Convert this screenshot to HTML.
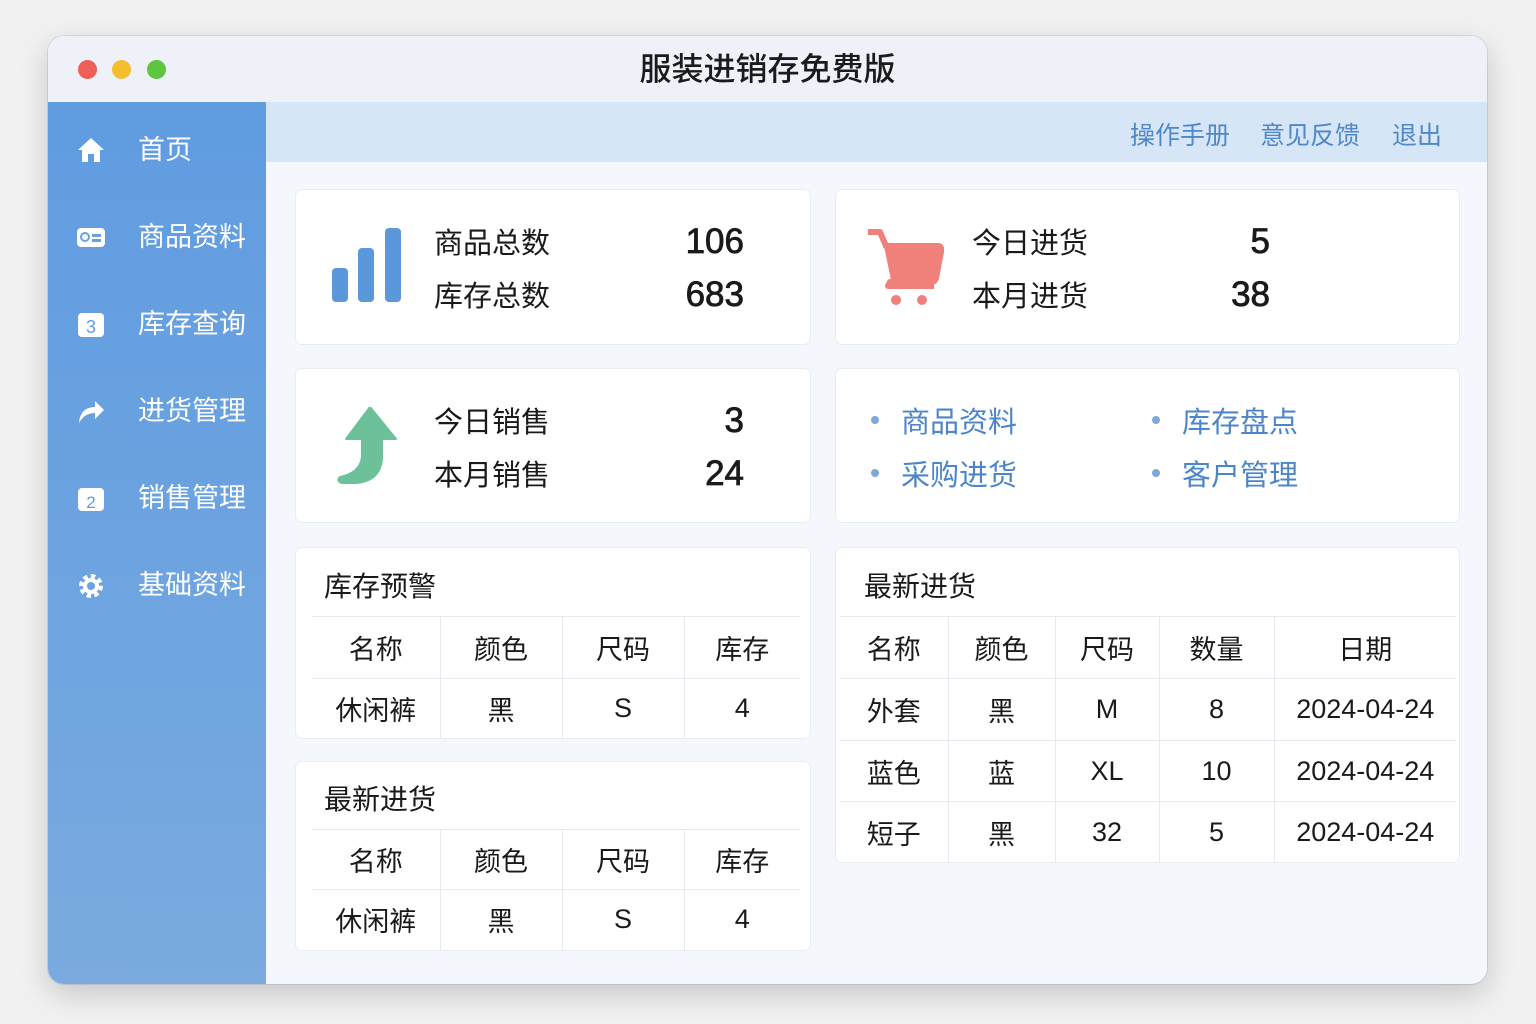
<!DOCTYPE html>
<html><head><meta charset="utf-8"><style>
*{margin:0;padding:0;box-sizing:border-box}
body{width:1536px;height:1024px;background:#f1f1f2;font-family:"Liberation Sans","Noto Sans CJK SC",sans-serif;position:relative;overflow:hidden}
.win{position:absolute;left:48px;top:36px;width:1439px;height:948px;border-radius:16px;overflow:hidden;background:#f4f7fb;box-shadow:0 10px 30px rgba(0,0,0,.18),0 0 0 1px #d8dce2}
.title{position:absolute;left:0;top:0;width:100%;height:66px;background:#eef2f8;text-align:center;line-height:66px;font-size:32px;color:#1b1b1b;font-weight:500}
.dot{position:absolute;top:24px;width:19px;height:19px;border-radius:50%}
.side{position:absolute;left:0;top:66px;width:218px;height:882px;background:linear-gradient(#5f9ce0,#7aaadf)}
.si{position:absolute;left:0;width:218px;color:#fff;font-size:27px}
.si span{position:absolute;left:90px;top:0;line-height:40px}
.si svg{position:absolute;left:28px;top:6px}
.top{position:absolute;left:218px;top:66px;right:0;height:60px;background:#d6e6f7}
.top a{position:absolute;top:14px;font-size:25px;color:#4f88c9}
.card{position:absolute;background:#fff;border-radius:6px;box-shadow:0 0 0 1px #e8edf3}
.lab{position:absolute;font-size:29px;color:#1a1a1a}
.num{position:absolute;font-size:35px;color:#1a1a1a;text-align:right;width:120px;-webkit-text-stroke:0.8px #1a1a1a}
.lk{position:absolute;font-size:29px;color:#4c86c9}
.lk:before{content:"";position:absolute;left:-30px;top:17px;width:8px;height:8px;border-radius:50%;background:#7fa8d9}
table{position:absolute;border-collapse:collapse;font-size:27px;color:#1a1a1a}
td{text-align:center;border-right:1px solid #e6eaef;border-top:1px solid #e6eaef;padding:0}
td:last-child{border-right:none}
.tt{position:absolute;font-size:28px;color:#1a1a1a}
</style></head><body>
<div class="win">
<div class="title">服装进销存免费版</div>
<div class="dot" style="left:30px;background:#ee5f57"></div>
<div class="dot" style="left:64px;background:#f4be2f"></div>
<div class="dot" style="left:99px;background:#5ec53f"></div>
<div class="side">
 <div class="si" style="top:28px"><svg width="30" height="28" viewBox="0 0 30 28"><path d="M15 2 L2 14 H6 V26 H12 V18 H18 V26 H24 V14 H28 Z" fill="#fff"/></svg><span>首页</span></div>
 <div class="si" style="top:115px"><svg width="30" height="28" viewBox="0 0 30 28"><rect x="1" y="5" width="28" height="19" rx="4" fill="#fff"/><rect x="16" y="11" width="9" height="3" fill="#6aa2e0"/><rect x="16" y="16" width="9" height="3" fill="#6aa2e0"/><circle cx="9" cy="14" r="4" fill="none" stroke="#6aa2e0" stroke-width="2"/></svg><span>商品资料</span></div>
 <div class="si" style="top:202px"><svg width="30" height="28" viewBox="0 0 30 28"><rect x="2" y="3" width="26" height="24" rx="4" fill="#fff"/><text x="15" y="23" font-size="18" text-anchor="middle" fill="#5f9ce0" font-family="Liberation Sans">3</text></svg><span>库存查询</span></div>
 <div class="si" style="top:289px"><svg width="30" height="28" viewBox="0 0 30 28"><path d="M3 26 C4 14 11 10 19 10 V4 L28 13 L19 22 V16 C12 16 7 19 3 26 Z" fill="#fff"/></svg><span>进货管理</span></div>
 <div class="si" style="top:376px"><svg width="30" height="28" viewBox="0 0 30 28"><rect x="2" y="4" width="26" height="23" rx="4" fill="#fff"/><text x="15" y="24" font-size="17" text-anchor="middle" fill="#5f9ce0" font-family="Liberation Sans">2</text></svg><span>销售管理</span></div>
 <div class="si" style="top:463px"><svg width="30" height="30" viewBox="0 0 30 30"><circle cx="15" cy="15" r="9" fill="none" stroke="#fff" stroke-width="6" stroke-dasharray="4 3"/><circle cx="15" cy="15" r="8" fill="#fff"/><circle cx="15" cy="15" r="4" fill="#6ba3e0"/></svg><span>基础资料</span></div>
</div>
<div class="top"><a style="left:864px">操作手册</a><a style="left:994px">意见反馈</a><a style="left:1126px">退出</a></div>

<div class="card" style="left:248px;top:154px;width:514px;height:154px">
 <svg style="position:absolute;left:36px;top:38px" width="72" height="76"><rect x="0" y="40" width="16" height="34" rx="4" fill="#5b97db"/><rect x="26" y="20" width="16" height="54" rx="4" fill="#5b97db"/><rect x="53" y="0" width="16" height="74" rx="4" fill="#5b97db"/></svg>
 <div class="lab" style="left:138px;top:30px">商品总数</div><div class="lab" style="left:138px;top:83px">库存总数</div>
 <div class="num" style="left:328px;top:32px">106</div><div class="num" style="left:328px;top:85px">683</div>
</div>
<div class="card" style="left:788px;top:154px;width:623px;height:154px">
 <svg style="position:absolute;left:28px;top:36px" width="80" height="82"><path d="M4 6 H16 L22 20 H74 Q78 20 77 26 L72 52 Q71 56 66 56 H26 L24 60 H70" fill="none" stroke="#f0807a" stroke-width="6" stroke-linejoin="round"/><path d="M20 20 H76 L71 54 H27 Z" fill="#f0807a"/><circle cx="32" cy="74" r="5" fill="#f0807a"/><circle cx="58" cy="74" r="5" fill="#f0807a"/></svg>
 <div class="lab" style="left:136px;top:30px">今日进货</div><div class="lab" style="left:136px;top:83px">本月进货</div>
 <div class="num" style="left:314px;top:32px">5</div><div class="num" style="left:314px;top:85px">38</div>
</div>
<div class="card" style="left:248px;top:333px;width:514px;height:153px">
 <svg style="position:absolute;left:40px;top:38px" width="66" height="80"><path d="M34 0 L60 32 H46 V52 Q44 74 20 76 H6 Q0 74 4 70 Q24 66 26 50 V32 H10 Z" fill="#6cc19b" stroke="#6cc19b" stroke-width="2" stroke-linejoin="round"/></svg>
 <div class="lab" style="left:138px;top:30px">今日销售</div><div class="lab" style="left:138px;top:83px">本月销售</div>
 <div class="num" style="left:328px;top:32px">3</div><div class="num" style="left:328px;top:85px">24</div>
</div>
<div class="card" style="left:788px;top:333px;width:623px;height:153px">
 <div class="lk" style="left:65px;top:30px">商品资料</div><div class="lk" style="left:65px;top:83px">采购进货</div>
 <div class="lk" style="left:346px;top:30px">库存盘点</div><div class="lk" style="left:346px;top:83px">客户管理</div>
</div>

<div class="card" style="left:248px;top:512px;width:514px;height:190px">
 <div class="tt" style="left:28px;top:17px">库存预警</div>
 <table style="left:16px;top:68px;width:488px"><colgroup><col width="128"><col width="122"><col width="122"><col width="116"></colgroup>
 <tr style="height:62px"><td>名称</td><td>颜色</td><td>尺码</td><td>库存</td></tr>
 <tr style="height:60px"><td>休闲裤</td><td>黑</td><td>S</td><td>4</td></tr></table>
</div>
<div class="card" style="left:248px;top:726px;width:514px;height:188px">
 <div class="tt" style="left:28px;top:16px">最新进货</div>
 <table style="left:16px;top:67px;width:488px"><colgroup><col width="128"><col width="122"><col width="122"><col width="116"></colgroup>
 <tr style="height:60px"><td>名称</td><td>颜色</td><td>尺码</td><td>库存</td></tr>
 <tr style="height:60px"><td>休闲裤</td><td>黑</td><td>S</td><td>4</td></tr></table>
</div>
<div class="card" style="left:788px;top:512px;width:623px;height:314px">
 <div class="tt" style="left:28px;top:17px">最新进货</div>
 <table style="left:4px;top:68px;width:616px"><colgroup><col width="108"><col width="107"><col width="104"><col width="115"><col width="182"></colgroup>
 <tr style="height:62px"><td>名称</td><td>颜色</td><td>尺码</td><td>数量</td><td>日期</td></tr>
 <tr style="height:62px"><td>外套</td><td>黑</td><td>M</td><td>8</td><td>2024-04-24</td></tr>
 <tr style="height:61px"><td>蓝色</td><td>蓝</td><td>XL</td><td>10</td><td>2024-04-24</td></tr>
 <tr style="height:61px"><td>短子</td><td>黑</td><td>32</td><td>5</td><td>2024-04-24</td></tr></table>
</div>
</div>
</body></html>
